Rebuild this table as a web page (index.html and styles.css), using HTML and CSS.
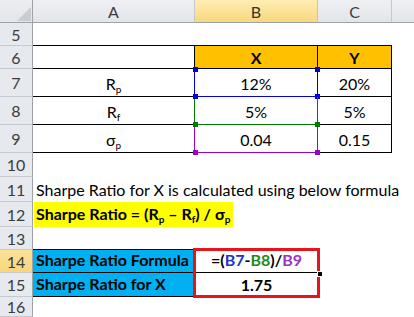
FILE: index.html
```html
<!DOCTYPE html>
<html>
<head>
<meta charset="utf-8">
<link rel="stylesheet" href="styles.css">
</head>
<body>
<div class="sheet">
  <div class="corner"><svg width="18" height="16" viewBox="0 0 18 16"><polygon points="17,1 17,15 3,15" fill="#c9ccd1"/></svg></div>
  <div class="colh">A</div>
  <div class="colh active">B</div>
  <div class="colh">C</div>
  <div class="colh last"></div>

  <div class="rowh">5</div>
  <div class="c bb"></div><div class="c bb"></div><div class="c bb"></div><div class="c"></div>

  <div class="rowh">6</div>
  <div class="c bb br"></div>
  <div class="c gold bb br bold"><span>X</span></div>
  <div class="c gold bb br bold"><span>Y</span></div>
  <div class="c"></div>

  <div class="rowh">7</div>
  <div class="c bb br-blue"><span>R<sub>p</sub></span></div>
  <div class="c rel bb-blue br-blue"><span>12%</span><span class="h tl blue"></span><span class="h tr blue"></span><span class="h bl blue"></span><span class="h brr blue"></span></div>
  <div class="c bb br"><span>20%</span></div>
  <div class="c"></div>

  <div class="rowh">8</div>
  <div class="c bb br-green"><span>R<sub>f</sub></span></div>
  <div class="c rel bb-green br-green"><span>5%</span><span class="h bl green"></span><span class="h brr green"></span></div>
  <div class="c bb br"><span>5%</span></div>
  <div class="c"></div>

  <div class="rowh">9</div>
  <div class="c bb br-purple"><span>σ<sub>p</sub></span></div>
  <div class="c rel bb-purple br-purple"><span>0.04</span><span class="h bl purple"></span><span class="h brr purple"></span></div>
  <div class="c bb br"><span>0.15</span></div>
  <div class="c"></div>

  <div class="rowh">10</div>
  <div class="c wide"></div>

  <div class="rowh">11</div>
  <div class="c wide left"><span>Sharpe Ratio for X is calculated using below formula</span></div>

  <div class="rowh">12</div>
  <div class="c wide left"><span class="hl bold">Sharpe Ratio = (R<sub>p</sub> – R<sub>f</sub>) / σ<sub>p</sub></span></div>

  <div class="rowh">13</div>
  <div class="c bb"></div><div class="c"></div><div class="c"></div><div class="c"></div>

  <div class="rowh activeh">14</div>
  <div class="c cyan bb br left bold"><span>Sharpe Ratio Formula</span></div>
  <div class="c rel bb bold"><span>=(<span class="fb">B7</span>-<span class="fg">B8</span>)/<span class="fp">B9</span></span><div class="redbox"><span class="fill"></span></div></div>
  <div class="c"></div><div class="c"></div>

  <div class="rowh">15</div>
  <div class="c cyan bb br left bold"><span>Sharpe Ratio for X</span></div>
  <div class="c bold"><span>1.75</span></div>
  <div class="c"></div><div class="c"></div>

  <div class="rowh">16</div>
  <div class="c wide"></div>
</div>
</body>
</html>
```
FILE: styles.css
```css
html, body {
  margin: 0;
  background: #ffffff;
}
.sheet {
  display: grid;
  grid-template-columns: 33px 162px 123px 74px 22px;
  grid-template-rows: 23px 23px 23px 28px 28px 28px 24px 25px 25px 23px 23px 24px 20px;
  width: 414px;
  height: 317px;
  overflow: hidden;
  font-family: Lato, "Liberation Sans", sans-serif;
}
.corner {
  box-sizing: border-box;
  background: linear-gradient(#eceef1, #e3e6ea);
  border-right: 1px solid #9ea3aa;
  border-bottom: 1px solid #9ea3aa;
  display: flex;
  align-items: flex-end;
  justify-content: flex-end;
}
.corner svg { display: block; }
.colh {
  box-sizing: border-box;
  background: linear-gradient(#eef0f3, #e2e5e9);
  border-right: 1px solid #c6cad0;
  border-bottom: 1px solid #9ea3aa;
  display: flex;
  align-items: center;
  justify-content: center;
  font-size: 16px;
  color: #3c3c3c;
}
.colh.active {
  background: linear-gradient(#fdeeb4, #f9d77c);
  border-right-color: #e8c56c;
  color: #333;
}
.colh.last { border-right: none; }
.rowh {
  box-sizing: border-box;
  background: #e6e9ed;
  border-right: 1px solid #9ea3aa;
  border-bottom: 1px solid #c6cad0;
  display: flex;
  align-items: center;
  justify-content: center;
  font-size: 16px;
  color: #3c3c3c;
}
.rowh.activeh {
  background: linear-gradient(#fbe39a, #f8d57a);
}
.c {
  box-sizing: border-box;
  display: flex;
  align-items: flex-end;
  justify-content: center;
  padding-bottom: 3px;
  font-size: 16px;
  line-height: 19px;
  color: #000;
  white-space: nowrap;
}
.c sub {
  font-size: 10px;
  vertical-align: -3px;
  line-height: 0;
}
.wide { grid-column: 2 / 6; }
.left { justify-content: flex-start; padding-left: 3px; }
.bold { font-weight: bold; }
.rel { position: relative; }
.bb { border-bottom: 1px solid #000; }
.br { border-right: 1px solid #000; }
.bb-blue { border-bottom: 1px solid #0000e0; }
.br-blue { border-right: 1px solid #0000e0; }
.bb-green { border-bottom: 1px solid #007a00; }
.br-green { border-right: 1px solid #007a00; }
.bb-purple { border-bottom: 1px solid #9900cc; }
.br-purple { border-right: 1px solid #9900cc; }
.gold { background: #ffc000; align-items: center; padding-bottom: 0; }
.cyan { background: #00b0f0; }
.hl {
  background: #ffff00;
  display: inline-block;
  margin-left: -2px;
  padding: 2px 3px 3px 2px;
  margin-bottom: -3px;
  height: 20px;
}
.h {
  position: absolute;
  width: 5px;
  height: 5px;
}
.h.tl { left: -2px; top: -2px; }
.h.tr { right: -3px; top: -2px; }
.h.bl { left: -2px; bottom: -3px; }
.h.brr { right: -3px; bottom: -3px; }
.h.blue { background: #0000e0; }
.h.green { background: #007a00; }
.h.purple { background: #9900cc; }
.fb { color: #2233cc; }
.fg { color: #1e8a1e; }
.fp { color: #9933cc; }
.redbox {
  position: absolute;
  box-sizing: border-box;
  left: -2px;
  right: -2px;
  top: -2px;
  height: 50px;
  border: 3px solid #e8141c;
  z-index: 2;
  pointer-events: none;
}
.fill {
  position: absolute;
  right: -6px;
  top: 20px;
  width: 4px;
  height: 4px;
  background: #000;
  border: 1px solid #fff;
}
```
